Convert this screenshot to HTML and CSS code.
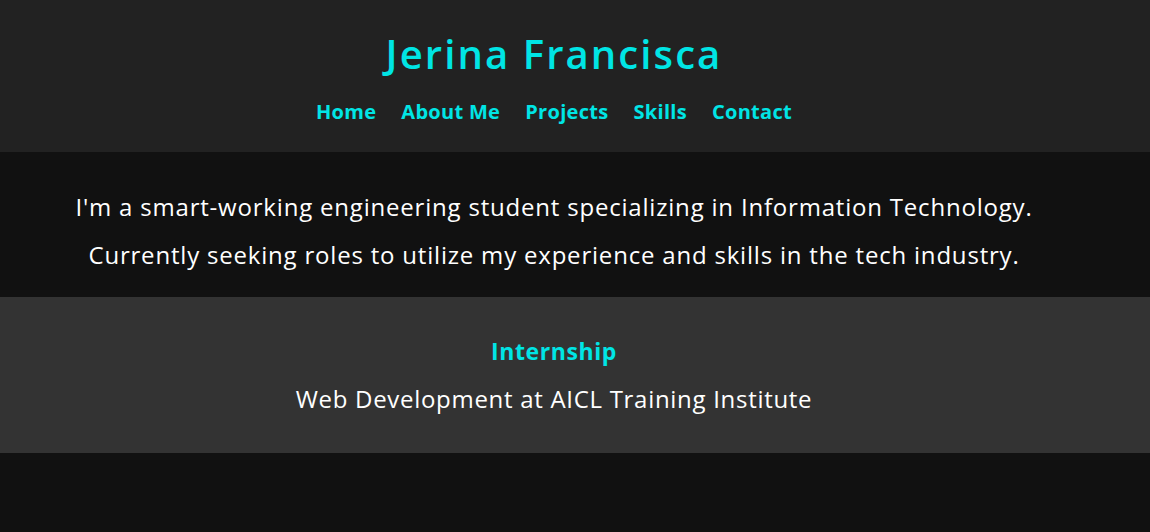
FILE: index.html
```html
<!DOCTYPE html>
<html lang="en">
<head>
<meta charset="utf-8">
<title>Jerina Francisca</title>
<link rel="stylesheet" href="styles.css">
</head>
<body>
<header class="site-header">
  <div class="inner">
    <h1 class="name">Jerina Francisca</h1>
    <nav class="nav">
      <a href="#">Home</a>
      <a href="#">About Me</a>
      <a href="#">Projects</a>
      <a href="#">Skills</a>
      <a href="#">Contact</a>
    </nav>
  </div>
</header>
<section class="intro">
  <div class="inner">
    <p class="intro-text">I'm a smart-working engineering student specializing in Information Technology.<br>Currently seeking roles to utilize my experience and skills in the tech industry.</p>
  </div>
</section>
<section class="experience">
  <div class="inner">
    <h2 class="exp-title">Internship</h2>
    <p class="exp-text">Web Development at AICL Training Institute</p>
  </div>
</section>
</body>
</html>
```

FILE: styles.css
```css
html, body {
  margin: 0;
  padding: 0;
}
body {
  background: #111111;
  font-family: "Open Sans", "DejaVu Sans", sans-serif;
  color: #ffffff;
}
.inner {
  padding-right: 42px;
  text-align: center;
}
.site-header {
  background: #222222;
  padding: 30px 0 25px;
}
.name {
  margin: 0 0 19px;
  font-size: 40px;
  line-height: 48px;
  font-weight: 600;
  letter-spacing: 2.1px;
  color: #00e5e5;
}
.nav {
  display: flex;
  justify-content: center;
  gap: 25px;
  line-height: 30px;
}
.nav a {
  color: #00e5e5;
  text-decoration: none;
  font-size: 20px;
  font-weight: 700;
  letter-spacing: 0.3px;
}
.intro {
  background: #111111;
  padding: 31px 0 18px;
}
.intro-text {
  margin: 0;
  font-size: 24px;
  line-height: 48px;
  letter-spacing: 0.8px;
}
.experience {
  background: #333333;
  padding: 38px 0 38px;
}
.exp-title {
  margin: 0 0 16px;
  font-size: 23px;
  line-height: 32px;
  font-weight: 700;
  letter-spacing: 0.6px;
  color: #00e5e5;
}
.exp-text {
  margin: 0;
  font-size: 24px;
  line-height: 32px;
  letter-spacing: 0.7px;
}
```
